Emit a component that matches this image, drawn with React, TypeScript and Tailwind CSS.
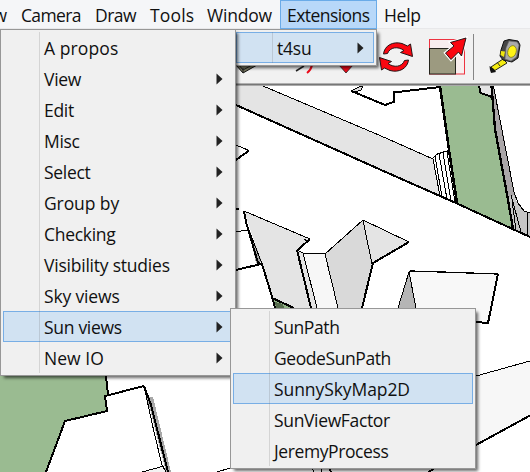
type Item = { label: string; fit: string; arrow?: boolean; active?: boolean };

const mainItems: Item[] = [
  { label: "A propos", fit: "tracking-[0.1px]" },
  { label: "View", fit: "tracking-[-0.3px]", arrow: true },
  { label: "Edit", fit: "tracking-[-0.3px]", arrow: true },
  { label: "Misc", fit: "tracking-[-0.3px]", arrow: true },
  { label: "Select", fit: "tracking-[-0.3px]", arrow: true },
  { label: "Group by", fit: "tracking-[-0.1px]", arrow: true },
  { label: "Checking", fit: "tracking-[-0.3px]", arrow: true },
  { label: "Visibility studies", fit: "tracking-[-0.22px]", arrow: true },
  { label: "Sky views", fit: "tracking-[-0.15px]", arrow: true },
  { label: "Sun views", fit: "tracking-[-0.3px]", arrow: true, active: true },
  { label: "New IO", fit: "tracking-[0.05px]", arrow: true },
];

const sunItems: Item[] = [
  { label: "SunPath", fit: "tracking-[-0.4px]" },
  { label: "GeodeSunPath", fit: "tracking-[-0.42px]" },
  { label: "SunnySkyMap2D", fit: "tracking-[-0.08px]", active: true },
  { label: "SunViewFactor", fit: "tracking-[-0.35px]" },
  { label: "JeremyProcess", fit: "tracking-[-0.4px]" },
];

function Row({ item }: { item: Item }) {
  return (
    <div
      className={`flex h-[31px] items-center justify-between border pl-[40px] pr-[9px] ${
        item.active ? "border-[#78aee5] bg-[#d1e2f2]" : "border-transparent"
      }`}
    >
      <span className={`whitespace-nowrap pt-[2px] leading-[29px] ${item.fit}`}>{item.label}</span>
      {item.arrow && (
        <svg width="7" height="12" viewBox="0 0 7 12" className="shrink-0">
          <path d="M0.5 0.5L6.5 6L0.5 11.5Z" fill="#222" />
        </svg>
      )}
    </div>
  );
}

function Menu({ items, place }: { items: Item[]; place: string }) {
  return (
    <div className={`absolute border border-[#979797] bg-[#f0f0f0] p-[2px] shadow-[3px_3px_3px_-1px_rgba(0,0,0,0.6)] ${place}`}>
      {items.map((i) => (
        <Row key={i.label} item={i} />
      ))}
      <div className="absolute bottom-[2px] left-[38px] top-[2px] w-px bg-[#64646433]" />
    </div>
  );
}

function Scene() {
  return (
    <svg width="530" height="386" viewBox="0 86 530 386" className="block bg-white" shapeRendering="crispEdges" fill="none" stroke="#000" strokeWidth="1">
      <g stroke="none">
        <path d="M236 86H263L433 159L440 197L236 105Z" fill="#e4e4e4" />
        <path d="M440 86H492L495 130L513 229L457 204L449 150Z" fill="#9abb91" />
        <path d="M479 86L480 93L492 97V86Z" fill="#e4e4e4" />
        <path d="M492 86H494L516 200L513 229L495 130Z" fill="#aaa6a8" />
        <path d="M509 197L514 195L518 204L524 211L530 213V237L513 229Z" fill="#c6c6c6" />
        <path d="M244 211L310 239L297 250L311 308H275L262 264Z" fill="#e4e4e4" />
        <path d="M248 226L262 262L256 263Z" fill="#a5a5a5" />
        <path d="M272 298L293 308H275Z" fill="#91b386" />
        <path d="M275 302L283 304L284 308H276Z" fill="#556b4c" />
        <path d="M297 250L303 253L317 308H311Z" fill="#e4e4e4" />
        <path d="M303 253L325 254L338 308H317Z" fill="#f7f7f7" />
        <path d="M325 254L363 220L373 264L362 308H338Z" fill="#d9d9d9" />
        <path d="M363 220L409 242L373 264Z" fill="#e4e4e4" />
        <path d="M409 272L498 274L488 323L416 308Z" fill="#f8f8f8" />
        <path d="M409 272L398 308H416Z" fill="#b5b5b5" />
        <path d="M476 376L530 361V416L476 445Z" fill="#f7f7f7" />
        <path d="M0 376H106L108 395L105 396L107 411L65 421L46 472H0Z" fill="#9abb91" />
        <path d="M144 386L149 397H153L171 472H166Z" fill="#a8a8a8" />
        <path d="M142 472L164 466L166 472Z" fill="#f3f3f3" />
      </g>
      <path d="M263 86L380 135.5L433 159L440 196M435 156L442 197M439 154L447 199M443 153L451 201M447 152L455 202" />
      <path d="M432 159L437 154L449 150.5" strokeWidth="1.3" />
      <path d="M236 105L380 169.5L457 203.5L530 237" strokeWidth="2" />
      <path d="M351.500 91L361 86H363L361 90L354 92.500Z" fill="#ddd" />
      <path d="M351.500 91L385 105L393.500 102V92.500L440 87" strokeWidth="2" />
      <path d="M440 86L449 150L457 203" strokeWidth="2.5" />
      <path d="M479 86L480.500 93L492 97" strokeWidth="2" />
      <path d="M491.500 86L492.500 98L495 129L508 200L513 229" strokeWidth="2.3" />
      <path d="M493.500 86L499 115L514 192L518 203L524 211L530 213M512 200L516 230M511 195L521 232M527 213L528 236" />
      <path d="M236 145L249 150.500M236 232L247 230M244 211L310 239L307 241L304 239" />
      <path d="M249 150.500L236 160M236 209H239M236 270L261 264M310 239L297 250.500" strokeWidth="2" />
      <path d="M244 211L248 229L258 264M249 230L262 264" />
      <path d="M244 211L246 222L258 263L262 264L273 300L275 308M272 298L294 308M297 250L311 308" strokeWidth="2" />
      <path d="M297 250L303 253L325 254L363 220L409 242M303 253L317 308M325 254L338 308M363 220L372 264" />
      <path d="M409 242L373 263L362 308" strokeWidth="2" />
      <path d="M409 272L398 308M409 272L416 308M476 376L530 361" />
      <path d="M408 273L410 271L441 272L470 273L498 274" strokeWidth="1.3" />
      <path d="M498 274L488 323L476 322M476 445L530 415.500M428 472L434 469M328 465L331 472" strokeWidth="2" />
      <path d="M311 465L314 472M320 465L322 472M217 472L230 468M142 472L164 466" />
      <path d="M106 376L108 395M144 386L105 396L107 411L65 421L46 472M144 386L151 405L168 472" strokeWidth="2" />
      <path d="M144 386L154 432L162 465L166 472" />
    </svg>
  );
}

const turnArrow =
  "M383.500 54C384.500 45.500 393 41 402 43.500L407.500 46L410.500 44L412.500 56.500L400.500 52.500L404 50.500C398 46 390 47 387.500 53.500Z";
const scaleArrow = "M466 38L450.500 42.500L454 46L445.500 53L451 59.500L458.500 52L461.500 56Z";

function Toolbar() {
  return (
    <svg width="530" height="57" viewBox="0 29 530 57" className="block bg-[#f1f1f1]">
      <path d="M236 65H257L243 73Z" fill="#77765e" stroke="#111" />
      <path d="M239 65L243 70L252 65M243 68V73" stroke="#222" fill="none" />
      <path d="M296 71L304 66" stroke="#222" strokeWidth="1.5" />
      <path d="M307 73Q311 70 312 65" stroke="#ed0b1a" strokeWidth="2" fill="none" />
      <path d="M339 65H353L346 73Z" fill="#ed0b1a" stroke="#222" strokeWidth=".8" />
      <g fill="#fa0711" stroke="#251516" strokeWidth="1" strokeLinejoin="round">
        <path d={turnArrow} />
        <path d={turnArrow} transform="rotate(180 396 57)" />
      </g>
      <rect x="429.500" y="39.500" width="35" height="34.500" fill="#f8eeee" stroke="#ed3340" />
      <rect x="429.500" y="48.500" width="26" height="25.500" fill="#9c9a80" stroke="#24241c" />
      <path d={scaleArrow} fill="#fa0711" stroke="#fff" strokeWidth="3" />
      <path d={scaleArrow} fill="#fa0711" stroke="#281515" strokeWidth="1" />
      <path d="M473.500 34V80" stroke="#858585" />
      <path d="M503 59L491 67L494 71L507 63Z" fill="#f4ec12" stroke="#262616" />
      <path d="M489.500 66L494 69L496 72L491 73L490 70Z" fill="#111" />
      <path d="M497 62L500 66" stroke="#333" />
      <path d="M504 41L509 39.500L518 41L520 45L518 58L512 62L503 60L500 56L501 50Z" fill="#454545" stroke="#111" />
      <path d="M501 51L505 51.500L504 57L500.500 55Z" fill="#efe611" />
      <path d="M509 41L517 42L519 45L516.500 57L511 61L505 59L506 48Z" fill="#aaa" stroke="#666" strokeWidth=".6" />
      <ellipse cx="512" cy="51.500" rx="4.200" ry="6" transform="rotate(17 512 51.500)" fill="#fff416" stroke="#77751b" strokeWidth=".7" />
      <path d="M0 83.500H530" stroke="#b0b0b0" />
      <path d="M0 84.500H530" stroke="#777" />
      <path d="M0 85.500H530" stroke="#aaa" />
    </svg>
  );
}

export default function App() {
  return (
    <div className="relative h-[472px] w-[530px] overflow-hidden bg-white font-['Open_Sans','Noto_Sans',sans-serif] text-[17.5px] text-[#101010]">
      <div className="flex h-[29px] items-start whitespace-nowrap border-b border-[#e8e8ea] bg-[#f5f6f8] leading-[31px]">
        <span className="flex w-[21px] justify-end pr-[14px]">w</span>
        <span className="w-[74px] tracking-[-0.65px]">Camera</span>
        <span className="w-[55px] tracking-[-0.5px]">Draw</span>
        <span className="w-[57px] tracking-[0.15px]">Tools</span>
        <span className="w-[73px] tracking-[-0.2px]">Window</span>
        <span className="h-[29px] w-[97px] border border-[#6aabe8] bg-[#b8d8f9] pl-[6px] leading-[29px] tracking-[-0.55px]">Extensions</span>
        <span className="pl-[7px] tracking-[-0.3px]">Help</span>
      </div>
      <Toolbar />
      <Scene />

      <Menu
        items={[{ label: "t4su", fit: "tracking-[-0.2px]", arrow: true, active: true }]}
        place="left-[233px] top-[29px] w-[144px] h-[37px]"
      />
      <Menu items={mainItems} place="left-0 top-[29px] w-[236px]" />
      <Menu items={sunItems} place="left-[230px] top-[308px] w-[246px]" />
    </div>
  );
}
